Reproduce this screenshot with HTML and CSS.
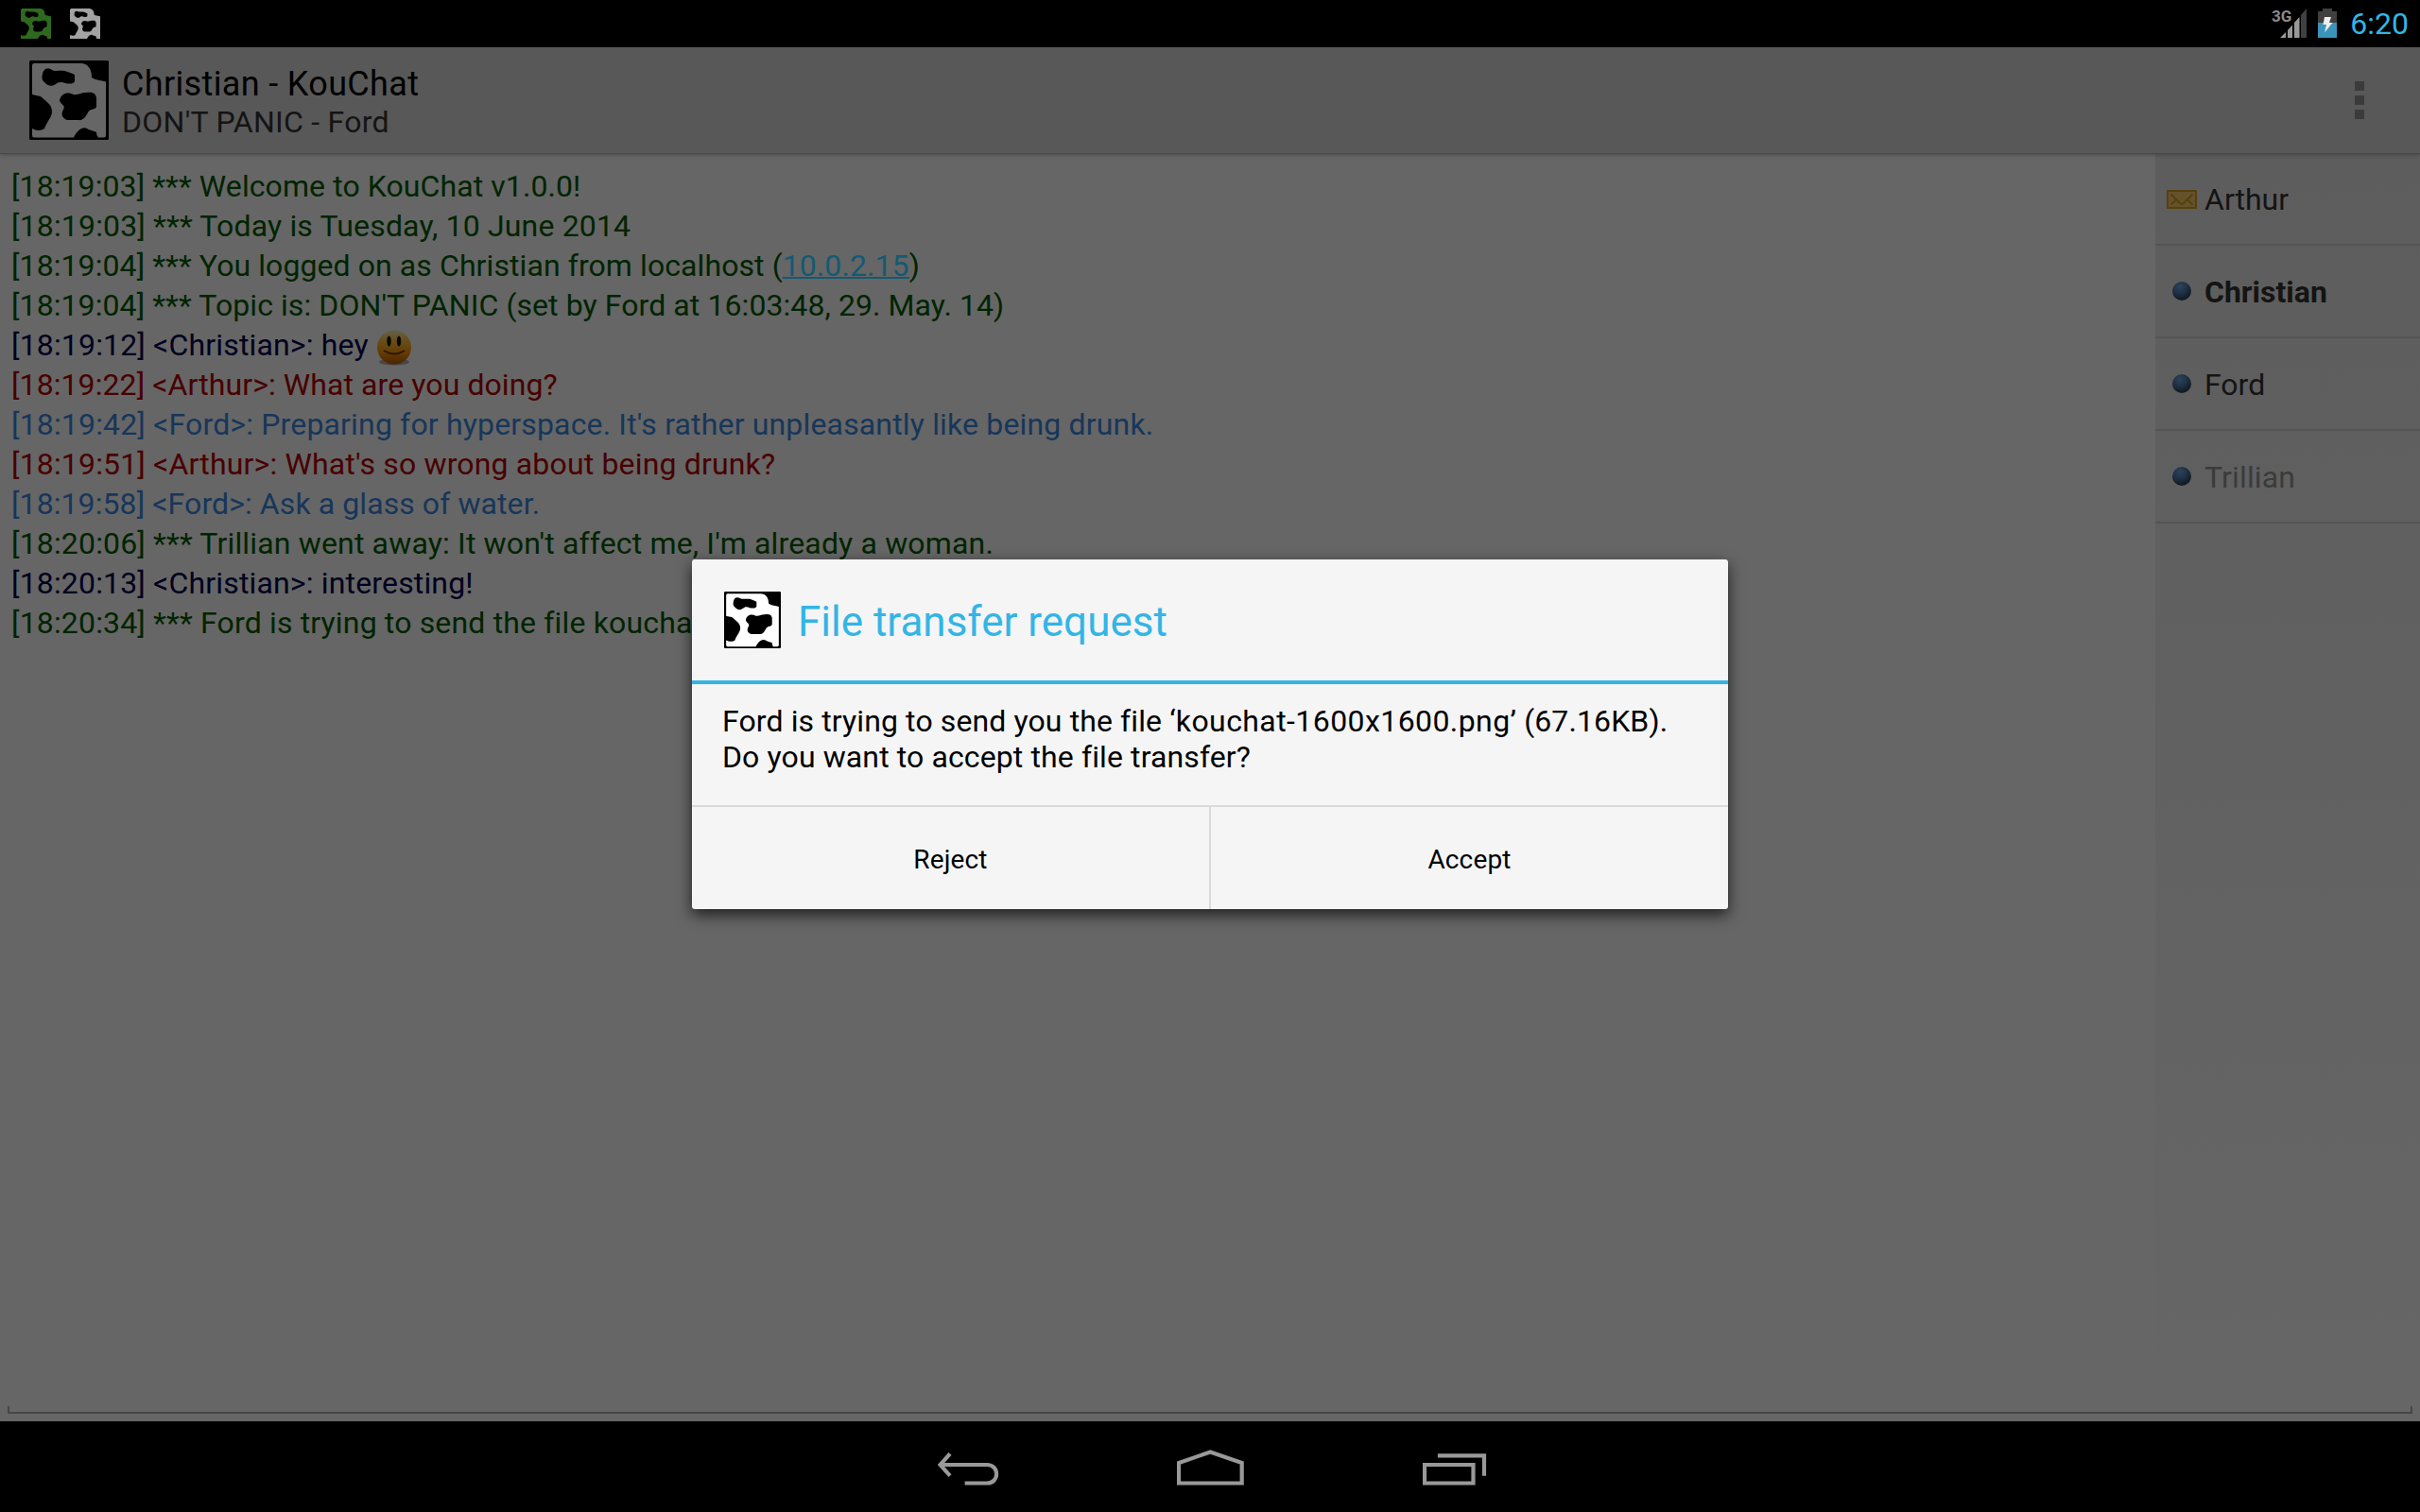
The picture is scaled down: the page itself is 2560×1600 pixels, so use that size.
FILE: index.html
```html
<!DOCTYPE html>
<html lang="en">
<head>
<meta charset="utf-8">
<title>KouChat</title>
<link rel="stylesheet" href="styles.css">
</head>
<body>
<svg class="defs" aria-hidden="true">
  <symbol id="cow" viewBox="0 0 84 84">
    <rect width="84" height="84" rx="1.5" fill="#000"/>
    <path class="hide" d="M5 3H54C62 3 66 9 66 18C70 21 76 21 81 22.500V79Q81 81.500 79 81.500H73Q71 80 71 76C67 74 64 74 61 72C55 69 49 77 47 81.500H5Q3 81.500 3 79V72C8 75 14 74 16 72C19 64 24 60 24 54C24 46 17 43 12 38C9 37 6 37 3 36V6Q3 3 5 3Z"/>
    <path d="M14 14C15 9 19 7 24 10C27 12 33 10 37 11C41 12 44 13 48 15V22C47 25 42 25 38 24C33 22 30 23 28 25C24 28 20 27 17 24C13 21 13 18 14 14ZM32 42C34 34 41 33 47 36C52 37 54 34 60 34C66 33 70 34 71 39V49C69 53 65 50 62 55C60 59 57 64 52 63H40C35 61 33 57 36 52C39 47 33 47 32 42Z" fill="#000"/>
  </symbol>
  <symbol id="cow-status" viewBox="2 2 80 80">
    <path fill-rule="evenodd" d="M5 2H54C62 3 66 9 66 18C70 21 76 21 82 22.500V82H73Q71 80 71 76C67 74 64 74 61 72C55 69 49 77 47 82H2V72C8 75 14 74 16 72C19 64 24 60 24 54C24 46 17 43 12 38C9 37 6 37 2 36V5ZM14 14C15 9 19 7 24 10C27 12 33 10 37 11C41 12 44 13 48 15V22C47 25 42 25 38 24C33 22 30 23 28 25C24 28 20 27 17 24C13 21 13 18 14 14ZM32 42C34 34 41 33 47 36C52 37 54 34 60 34C66 33 70 34 71 39V49C69 53 65 50 62 55C60 59 57 64 52 63H40C35 61 33 57 36 52C39 47 33 47 32 42Z" fill="currentColor"/>
  </symbol>
  <symbol id="orb" viewBox="0 0 20 20">
    <circle cx="10" cy="10" r="10" fill="url(#orb-fill)"/>
  </symbol>
  <radialGradient id="orb-fill" cx=".4" cy=".25" r=".75">
    <stop offset="0" stop-color="#2b435c"/><stop offset=".5" stop-color="#1f3145"/><stop offset="1" stop-color="#10171f"/>
  </radialGradient>
  <linearGradient id="smile-fill" x1="0" y1="0" x2="0" y2="1">
    <stop offset="0" stop-color="#66604c"/><stop offset=".3" stop-color="#66501a"/><stop offset=".65" stop-color="#663c02"/><stop offset="1" stop-color="#4a2400"/>
  </linearGradient>
</svg>

<header class="status-bar">
  <div class="notifications">
    <svg class="note note-green"><use href="#cow-status"/></svg>
    <svg class="note note-gray"><use href="#cow-status"/></svg>
  </div>
  <div class="system">
    <span class="network">3G</span>
    <svg class="signal" viewBox="0 0 28 32"><path d="M0 31 6 25V31ZM8 31V23L13 17.500V31ZM15 31V15L20.500 9V31Z" fill="#999"/><path d="M22 31V7L28 0V31Z" fill="#404040"/></svg>
    <svg class="battery" viewBox="0 0 20 31"><path d="M0 3H5V0H15V3H20V15H0Z" fill="#404040"/><path d="M0 15H20V31H0Z" fill="#3a94ba"/><path d="M7 9H14L12 15H15.500L7 25.500 9 17H5.500Z" fill="#eee"/></svg>
    <time class="clock">6:20</time>
  </div>
</header>

<div class="action-bar">
  <svg class="app-icon"><use href="#cow"/></svg>
  <div class="titles">
    <h1 class="title">Christian - KouChat</h1>
    <p class="subtitle">DON'T PANIC - Ford</p>
  </div>
  <div class="overflow"><i></i><i></i><i></i></div>
</div>

<main class="content">
  <section class="chat">
    <div class="log">
      <p class="line info tight">[18:19:03] *** Welcome to KouChat v1.0.0!</p>
      <p class="line info wide">[18:19:03] *** Today is Tuesday, 10 June 2014</p>
      <p class="line info tight">[18:19:04] *** You logged on as Christian from localhost (<a class="link">10.0.2.15</a>)</p>
      <p class="line info tight">[18:19:04] *** Topic is: DON'T PANIC (set by Ford at 16:03:48, 29. May. 14)</p>
      <p class="line own wide">[18:19:12] &lt;Christian&gt;: hey <svg class="smile" viewBox="0 0 38 38"><ellipse cx="19" cy="34" rx="16" ry="3.500" fill="#000" opacity=".3"/><circle cx="19" cy="18.500" r="18" fill="url(#smile-fill)"/><ellipse cx="13.500" cy="12" rx="2.200" ry="5.500" fill="#0c0700"/><ellipse cx="24" cy="12" rx="2.200" ry="5.500" fill="#0c0700"/><path d="M8 22Q19 29 30 22" fill="none" stroke="#2c1600" stroke-width="2"/></svg></p>
      <p class="line red tight">[18:19:22] &lt;Arthur&gt;: What are you doing?</p>
      <p class="line blue wide">[18:19:42] &lt;Ford&gt;: Preparing for hyperspace. It's rather unpleasantly like being drunk.</p>
      <p class="line red wide">[18:19:51] &lt;Arthur&gt;: What's so wrong about being drunk?</p>
      <p class="line blue tight">[18:19:58] &lt;Ford&gt;: Ask a glass of water.</p>
      <p class="line info wide">[18:20:06] *** Trillian went away: It won't affect me, I'm already a woman.</p>
      <p class="line own wide">[18:20:13] &lt;Christian&gt;: interesting!</p>
      <p class="line info wide">[18:20:34] *** Ford is trying to send the file koucha</p>
    </div>
  </section>
  <ul class="users">
    <li class="user"><svg class="mail" viewBox="0 0 32 20"><path d="M1 1H31V19H1Z" fill="#66522a" stroke="#55400e" stroke-width="2"/><path d="M4.500 4.500 14 14Q16 15.500 18 14L27.500 4.500M4.500 15.500 10 10.500M27.500 15.500 22 10.500" fill="none" stroke="#55400e" stroke-width="2"/></svg><span>Arthur</span></li>
    <li class="user me"><svg class="orb"><use href="#orb"/></svg><span>Christian</span></li>
    <li class="user"><svg class="orb"><use href="#orb"/></svg><span>Ford</span></li>
    <li class="user away"><svg class="orb"><use href="#orb"/></svg><span>Trillian</span></li>
  </ul>
</main>
<div class="composer"><div class="field"></div></div>

<nav class="nav-bar">
  <svg class="nav-icon back" viewBox="0 0 66 40"><path d="M13 4.300 2.500 16 13 27.700M2.500 16H52C65.500 16 65.500 35.500 52 35.500H28.600" fill="none" stroke="#999" stroke-width="4.200"/></svg>
  <svg class="nav-icon home" viewBox="0 0 71 40"><path d="M2 14V35.500H68.700V14L35.300 2.500Z" fill="none" stroke="#999" stroke-width="4.200"/></svg>
  <svg class="nav-icon recent" viewBox="0 0 68 40"><path d="M2 16H53.500V35.500H2ZM15.900 6.300H65V27.700" fill="none" stroke="#999" stroke-width="4.200"/></svg>
</nav>

<div class="dialog" role="dialog">
  <div class="dialog-head">
    <svg class="dialog-icon"><use href="#cow"/></svg>
    <h2 class="dialog-title">File transfer request</h2>
  </div>
  <p class="message">Ford is trying to send you the file ‘<span class="filename">kouchat-1600x1600.png</span>’ (67.16KB).<br>Do you want to accept the file transfer?</p>
  <div class="buttons">
    <button class="button">Reject</button>
    <button class="button">Accept</button>
  </div>
</div>
</body>
</html>
```

FILE: styles.css
```css
* { box-sizing: border-box; margin: 0; padding: 0; }
body {
  width: 2560px;
  height: 1600px;
  display: flex;
  flex-direction: column;
  overflow: hidden;
  background: #666;
  font-family: Roboto, "Noto Sans", sans-serif;
  font-size: 32px;
}
.defs { position: absolute; width: 0; height: 0; }
svg { display: block; flex: none; }

.status-bar { height: 50px; background: #000; display: flex; justify-content: space-between; }
.notifications { display: flex; gap: 20px; padding: 9px 0 0 22px; }
.note { width: 32px; height: 32px; }
.note-green { color: #2f691f; }
.note-gray { color: #a3a3a3; }
.system { display: flex; padding-right: 12px; }
.network { color: #8a8a8a; font-weight: 700; font-size: 17px; line-height: 20px; margin: 7px -12px 0 0; }
.signal { width: 28px; height: 32px; margin-top: 9px; }
.battery { width: 20px; height: 31px; margin: 9px 14px 0 12px; }
.clock { color: #33b5e5; line-height: 50px; }

.action-bar {
  height: 113px;
  display: flex;
  background: #585858;
  border-bottom: 1px solid #484848;
  box-shadow: 0 1px 4px rgba(0, 0, 0, .25);
  position: relative;
}
.app-icon { width: 84px; height: 84px; margin: 14px 14px 0 31px; color: #666; }
.hide { fill: currentColor; }
.title { font-size: 36px; line-height: 42px; font-weight: 400; color: #000; padding-top: 18px; letter-spacing: .35px; }
.subtitle { font-size: 32px; line-height: 38px; color: #141414; letter-spacing: .27px; }
.overflow { margin: 36px 59px 0 auto; display: flex; flex-direction: column; gap: 5px; }
.overflow i { width: 10px; height: 10px; background: #3b3b3b; }

.content { height: 1317px; display: flex; }
.chat { flex: 1; padding: 13px 12px 0; }
.line { height: 42px; line-height: 42px; white-space: nowrap; }
.tight { letter-spacing: .085px; }
.wide { letter-spacing: .16px; }
.info { color: #002400; }
.own { color: #00001e; display: flex; white-space: pre; }
.red { color: #480000; }
.blue { color: #17365a; }
.link { color: #145a72; text-decoration: underline; text-decoration-thickness: 2px; }
.smile { width: 38px; height: 38px; margin-top: 5px; }

.users { width: 280px; list-style: none; background: linear-gradient(#5d5d5d, #666); }
.user { height: 98px; border-bottom: 2px solid #545454; padding-left: 12px; display: flex; align-items: center; gap: 8px; color: #141414; }
.user:first-child { height: 97px; }
.user span { padding-top: 1px; }
.mail { width: 32px; height: 20px; }
.orb { width: 20px; height: 20px; margin: 0 6px; }
.me { font-weight: 700; }
.away { color: #3b3b3b; letter-spacing: .15px; }

.composer { height: 24px; padding: 8px 8px 0; }
.field { height: 8px; border: 2px solid #474747; border-top: 0; }

.nav-bar { height: 96px; background: #000; display: flex; padding: 30px 0 0 992px; }
.nav-icon { height: 40px; }
.back { width: 66px; }
.home { width: 71px; margin: 0 189px 0 187px; }
.recent { width: 68px; }

.dialog {
  position: absolute;
  left: 732px;
  top: 592px;
  width: 1096px;
  height: 370px;
  background: #f5f5f5;
  border-radius: 3px;
  box-shadow: 0 6px 16px rgba(0, 0, 0, .7);
}
.dialog-head { height: 132px; border-bottom: 4px solid #33b5e5; display: flex; padding-left: 34px; }
.dialog-icon { width: 60px; height: 60px; margin: 34px 18px 0 0; color: #fff; }
.dialog-title { font-size: 44px; line-height: 52px; font-weight: 400; color: #33b5e5; margin-top: 40px; }
.message { height: 128px; padding: 20px 0 0 32px; line-height: 38px; letter-spacing: .11px; }
.filename { letter-spacing: .42px; }
.buttons { height: 110px; border-top: 2px solid #dadada; display: flex; }
.button { flex: 1; border: 0; background: none; font: 28px Roboto, "Noto Sans", sans-serif; color: #000; letter-spacing: .15px; padding-top: 2px; }
.button + .button { border-left: 2px solid #dadada; }
```
